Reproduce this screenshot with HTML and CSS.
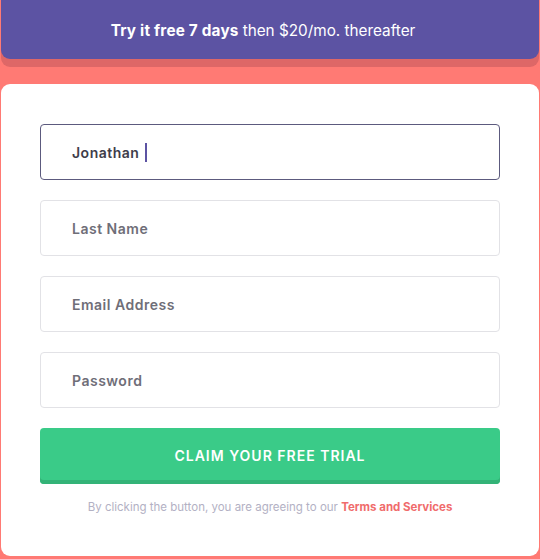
FILE: index.html
```html
<!DOCTYPE html>
<html lang="en">
<head>
<meta charset="utf-8">
<title>Free trial</title>
<link rel="stylesheet" href="styles.css">
</head>
<body>
<div class="page">
  <div class="banner"><strong>Try it free 7 days</strong> then $20/mo. thereafter</div>
  <form class="card">
    <div class="field focused"><span class="value">Jonathan</span><span class="caret"></span></div>
    <div class="field"><span class="placeholder">Last Name</span></div>
    <div class="field"><span class="placeholder">Email Address</span></div>
    <div class="field"><span class="placeholder">Password</span></div>
    <button type="button" class="submit">CLAIM YOUR FREE TRIAL</button>
    <p class="terms">By clicking the button, you are agreeing to our <a href="#">Terms and Services</a></p>
  </form>
</div>
</body>
</html>
```
FILE: styles.css
```css
* { box-sizing: border-box; }
html, body { margin: 0; padding: 0; }
body {
  background: #ff7a74;
  font-family: Inter, "Noto Sans", sans-serif;
  width: 540px;
  height: 559px;
  overflow: hidden;
}
.page {
  display: flex;
  flex-direction: column;
  gap: 17px;
  padding: 0 1px;
}
.banner {
  height: 59px;
  background: #5c53a3;
  color: #fff;
  border-radius: 0 0 9px 9px;
  box-shadow: 0 8px 0 #de6767;
  display: flex;
  align-items: center;
  justify-content: center;
  font-size: 15.3px;
  font-weight: 400;
  gap: 4px;
  padding: 2px 14px 0 0;
}
.banner strong { font-weight: 700; letter-spacing: 0.2px; }
.card {
  margin-top: 8px;
  background: #fff;
  border-radius: 9px;
  height: 472px;
  padding: 40px 39px 0 39px;
  display: flex;
  flex-direction: column;
  gap: 20px;
}
.field {
  height: 56px;
  border: 1px solid #e2e2e6;
  border-radius: 4px;
  display: flex;
  align-items: center;
  padding-left: 31px;
  font-size: 14px;
  font-weight: 600;
  letter-spacing: 0.5px;
}
.field.focused { border-color: #5c5a7e; }
.value { color: #3e3d4a; }
.caret {
  width: 2px;
  height: 19px;
  background: #5c53a3;
  margin-left: 6px;
}
.placeholder { color: #6f6e78; }
.submit {
  height: 56px;
  border: 0;
  border-radius: 4px;
  background: #3acb88;
  box-shadow: inset 0 -4px 0 #33b377;
  color: #fff;
  font-family: inherit;
  font-size: 14px;
  font-weight: 600;
  letter-spacing: 1px;
  padding-bottom: 3px;
}
.terms {
  margin: -4px 0 0;
  text-align: center;
  font-size: 11.5px;
  line-height: 14px;
  color: #b3b1c4;
}
.terms a {
  color: #f06c6c;
  font-weight: 700;
  text-decoration: none;
}
```
